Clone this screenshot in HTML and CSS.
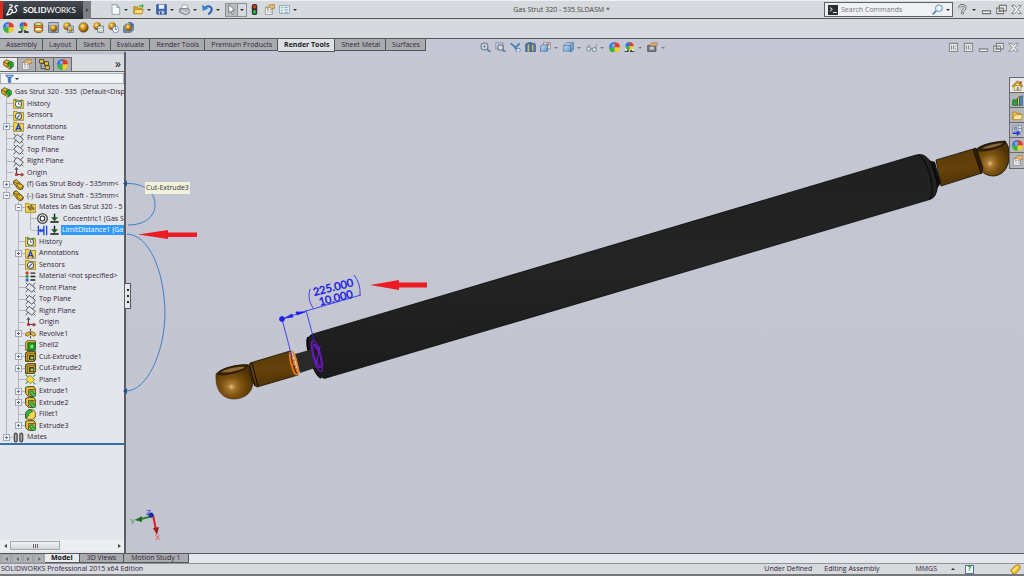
FILE: index.html
```html
<!DOCTYPE html>
<html lang="en">
<head>
<meta charset="utf-8">
<title>Gas Strut 320 - 535.SLDASM</title>
<link rel="stylesheet" href="styles.css">
</head>
<body>
<svg class="defs" aria-hidden="true">
  <defs>
    <radialGradient id="gold" cx=".4" cy=".35" r=".7"><stop offset="0" stop-color="#fff0b0"/><stop offset=".4" stop-color="#d89a20"/><stop offset="1" stop-color="#5a3a00"/></radialGradient>
    <linearGradient id="cube" x1="0" y1="0" x2="1" y2="1"><stop offset="0" stop-color="#d4e8fa"/><stop offset="1" stop-color="#4a86c0"/></linearGradient>
  </defs>
  <symbol id="new" viewBox="0 0 16 16"><path d="M3 1h7l4 4v10H3z" fill="#f8fbff" stroke="#74869a"/><path d="M10 1v4h4" fill="#b9cce0" stroke="#74869a"/></symbol>
  <symbol id="open" viewBox="0 0 16 16"><path d="M1 4h5l1 2h6v8H1z" fill="#e0a820" stroke="#a87810"/><path d="M3 8h12l-2 6H1z" fill="#ffe27a" stroke="#a87810"/><path d="M8 4c1-3 3-3 5-2V0l3 3-3 3V4c-2-1-3-1-5 0z" fill="#35a835"/></symbol>
  <symbol id="save" viewBox="0 0 16 16"><path d="M1 1h14v14H2l-1-1z" fill="#3a62b8" stroke="#1c3a80"/><path d="M4 1h8v6H4z" fill="#e8f0fa"/><path d="M4 10h8v5H4z" fill="#b8c8e0"/><path d="M6 11h2v4H6z" fill="#223c78"/></symbol>
  <symbol id="print" viewBox="0 0 16 16"><path d="M4 7l1-6 7 1 1 6z" fill="#fff" stroke="#8a94a0"/><path d="M1 7l12-1 2 3v4l-5 3-9-4z" fill="#b4bac2" stroke="#606872"/><path d="M3 10l7 3 4-2" fill="none" stroke="#f4f6f8"/></symbol>
  <symbol id="undo" viewBox="0 0 16 16"><path d="M4 6c5-5 11-2 10 3-1 3-3 5-5 6" fill="none" stroke="#2867b8" stroke-width="3"/><path d="M0 1l1 9 8-3z" fill="#3c82d0"/></symbol>
  <symbol id="cursor" viewBox="0 0 16 16"><path d="M4 1v12l3-3 2 5 2-1-2-5h4z" fill="#fff" stroke="#555"/></symbol>
  <symbol id="light" viewBox="0 0 16 16"><rect x="4" y="0" width="8" height="16" rx="3" fill="#303030"/><circle cx="8" cy="4" r="2.600" fill="#e83028"/><circle cx="8" cy="11.500" r="2.600" fill="#28b840"/></symbol>
  <symbol id="props" viewBox="0 0 16 16"><path d="M2 5h10v10H2z" fill="#fff" stroke="#777"/><path d="M4 8h3m1 0h3M4 10h3m1 0h3M4 12h3m1 0h3" stroke="#8a8a98"/><path d="M4 5l4-4h8v5l-5 1-3-2-3 2z" fill="#e3b672" stroke="#8d6228" stroke-width=".8"/></symbol>
  <symbol id="list" viewBox="0 0 16 16"><rect x="1" y="2" width="14" height="12" fill="#e6f0f8" stroke="#7a96aa"/><path d="M3 5l1 1 2-2M3 9l1 1 2-2" fill="none" stroke="#25974a"/><path d="M8 5h5M8 8.500h5M8 12h5M3 12h2" stroke="#6486aa"/></symbol>
  <symbol id="ball" viewBox="0 0 16 16"><path d="M8 8V0a8 8 0 0 1 8 8z" fill="#e33a2c"/><path d="M8 8h8a8 8 0 0 1-8 8z" fill="#f0cc2c"/><path d="M8 8v8a8 8 0 0 1-8-8z" fill="#36b73c"/><path d="M8 8H0a8 8 0 0 1 8-8z" fill="#2b6ee0"/><circle cx="6" cy="5" r="2.500" fill="#fff" opacity=".4"/></symbol>
  <symbol id="scene" viewBox="0 0 16 16"><path d="M0 16l2-7h12l2 7z" fill="#e4e4e4"/><path d="M0 16l1-3h3l1-3 2 2-1 4zM9 16l-1-3 3-2 1 2h3l1 3z" fill="#444"/><path d="M8 6V0a6 6 0 0 1 6 6z" fill="#e33a2c"/><path d="M8 6h6a6 6 0 0 1-6 6z" fill="#f0cc2c"/><path d="M8 6v6a6 6 0 0 1-6-6z" fill="#36b73c"/><path d="M8 6H2a6 6 0 0 1 6-6z" fill="#2b6ee0"/></symbol>
  <symbol id="drum" viewBox="0 0 16 16"><path d="M2 3h12v10c-2 3-10 3-12 0z" fill="#e0a828" stroke="#443008"/><ellipse cx="8" cy="3" rx="6" ry="2" fill="#fff2b0" stroke="#443008"/><path d="M2 6c3 2 9 2 12 0v2c-3 2-9 2-12 0z" fill="#cf3428"/><path d="M4 9h8v3H4z" fill="#f8f8e8"/></symbol>
  <symbol id="goldframe" viewBox="0 0 16 16"><rect x="1" y="1" width="14" height="14" fill="#90a6bd" stroke="#405468"/><path d="M1 3h14" stroke="#fff"/><circle cx="8" cy="9" r="5" fill="url(#gold)"/></symbol>
  <symbol id="gold2" viewBox="0 0 16 16"><circle cx="6" cy="6" r="5.500" fill="url(#gold)"/><rect x="7" y="6" width="8" height="9" fill="#cbd8e4" stroke="#506880"/><circle cx="11" cy="11" r="3" fill="url(#gold)"/></symbol>
  <symbol id="gold1" viewBox="0 0 16 16"><circle cx="8" cy="8" r="7" fill="url(#gold)" stroke="#50380c" stroke-width=".6"/></symbol>
  <symbol id="gold3" viewBox="0 0 16 16"><circle cx="6" cy="6" r="5.500" fill="url(#gold)"/><rect x="7" y="6" width="8" height="9" fill="#f4f8f4" stroke="#506880"/><path d="M8 9l1 1 2-2M8 13l1 1 2-2" fill="none" stroke="#248a3a"/><path d="M12 9h2M12 13h2" stroke="#456"/></symbol>
  <symbol id="gold4" viewBox="0 0 16 16"><circle cx="6" cy="6" r="5.500" fill="url(#gold)"/><circle cx="11" cy="11" r="4.500" fill="#fff" stroke="#3468b0"/><path d="M11 8v3h2" fill="none" stroke="#333"/></symbol>
  <symbol id="gold5" viewBox="0 0 16 16"><path d="M1 6l4-3h10v9l-4 3H1z" fill="#7898b8" stroke="#344e68"/><circle cx="8" cy="8" r="5" fill="url(#gold)"/><path d="M8 1c5-1 6 3 5 6" fill="none" stroke="#2762a8" stroke-width="2"/></symbol>
  <symbol id="asm" viewBox="0 0 16 16"><path d="M1 4l4-3 9 4v4l-3 1 2 3-3 2-4-3-5-3z" fill="#e7bd2d" stroke="#3a2d08"/><path d="M1 4l5 3 3-2M6 7v4" fill="none" stroke="#3a2d08"/><path d="M8 5l4-1 3 2v5l-4 2-3-3z" fill="#2fb53c" stroke="#0c5c18"/><path d="M8 6l4 2v4" fill="none" stroke="#0c5c18"/></symbol>
  <symbol id="part" viewBox="0 0 16 16"><path d="M1 3l4-2 5 5 5 4-1 4-4 2-5-4-1-3-3-2z" fill="#efc232" stroke="#3a2d08" stroke-width="1.300"/><path d="M2 5l4 1 4-0M6 6v4l5 4 4-3M9 9l2-2" fill="none" stroke="#3a2d08"/></symbol>
  <symbol id="cfg" viewBox="0 0 16 16"><path d="M3 1v13h6M3 6h6" fill="none" stroke="#222"/><rect x="1" y="1" width="6" height="5" fill="#efc232" stroke="#222"/><rect x="8" y="4" width="6" height="5" fill="#efc232" stroke="#222"/><rect x="9" y="10" width="6" height="5" fill="#efc232" stroke="#222"/></symbol>
  <symbol id="funnel" viewBox="0 0 16 16"><path d="M1 2h14l-5 6v7H6V8z" fill="#3f86d8" stroke="#1d529a"/><path d="M4 4h8" stroke="#cfe5ff" stroke-width="1.500"/></symbol>
  <symbol id="folder" viewBox="0 0 16 16"><path d="M.5 2h5l1 1.500h9V15H.5z" fill="#f6d248" stroke="#8a6a10"/></symbol>
  <symbol id="history" viewBox="0 0 16 16"><use href="#folder"/><circle cx="8" cy="9" r="4.500" fill="#fff" stroke="#2c6b7c" stroke-width="1.500"/><path d="M8 6v3h3" fill="none" stroke="#c03030" stroke-width="1.200"/><path d="M3 3l2 2M13 3l-2 2" stroke="#2a8838" stroke-width="2"/></symbol>
  <symbol id="sensor" viewBox="0 0 16 16"><use href="#folder"/><circle cx="8" cy="9" r="4.500" fill="#e9f2fa" stroke="#44525e" stroke-width="1.500"/><path d="M6 11l4-4" stroke="#245a9c" stroke-width="1.500"/></symbol>
  <symbol id="annot" viewBox="0 0 16 16"><use href="#folder"/><path d="M4 14l4-9 4 9M5.500 11h5" fill="none" stroke="#1b46c0" stroke-width="2"/></symbol>
  <symbol id="mategroup" viewBox="0 0 16 16"><use href="#folder"/><path d="M4 6l5 6M8 5l5 6" stroke="#4c3e14" stroke-width="3"/><path d="M4 6l5 6M8 5l5 6" stroke="#d8d0a8"/></symbol>
  <symbol id="plane" viewBox="0 0 16 16"><path d="M6 2l9 7-5 6-9-7zM1 1l3 3M15 1l-4 5M1 15l4-5M12 12l3 3" fill="none" stroke="#515963" stroke-width="1.400"/></symbol>
  <symbol id="gplane" viewBox="0 0 16 16"><path d="M7 2l7 6-6 6-7-6z" fill="#f8dc4c" stroke="#7c6310"/><path d="M1 1l3 3M15 1l-3 3M1 14l3-3M12 12l3 3" stroke="#26933a" stroke-width="1.500"/></symbol>
  <symbol id="origin" viewBox="0 0 16 16"><path d="M5 1v10h8" fill="none" stroke="#3c3c44" stroke-width="1.500"/><path d="M2 4l3-4 3 4zM12 8l4 3-4 3z" fill="#555"/><rect x="3" y="9" width="4" height="4" fill="#d03030"/><rect x="11" y="10" width="4" height="3" fill="#d03030"/></symbol>
  <symbol id="conc" viewBox="0 0 16 16"><circle cx="8" cy="8" r="7" fill="#f2f2f2" stroke="#222" stroke-width="1.500"/><circle cx="8" cy="8" r="3.500" fill="#fff" stroke="#222" stroke-width="1.500"/></symbol>
  <symbol id="ground" viewBox="0 0 16 16"><path d="M8 1v8M2 13h12" stroke="#111" stroke-width="2"/><path d="M3 6h10l-5 6z" fill="#1d5c24"/></symbol>
  <symbol id="dist" viewBox="0 0 16 16"><path d="M2 1v14M14 1v14M10 1v14M2 8h8" stroke="#2347dd" stroke-width="2"/><path d="M2 8l4-3v6zM10 8L7 5v6z" fill="#2347dd"/></symbol>
  <symbol id="mat" viewBox="0 0 16 16"><circle cx="3" cy="3" r="2.500" fill="#dc3838"/><circle cx="3" cy="8" r="2.500" fill="#36a844"/><circle cx="3" cy="13" r="2.500" fill="#3868d0"/><path d="M8 3h7M8 8h7M8 13h7" stroke="#222" stroke-width="2"/></symbol>
  <symbol id="revolve" viewBox="0 0 16 16"><path d="M0 10c2-6 14-6 16 0l-4 2c-1-3-7-3-8 0z" fill="#f0c030" stroke="#4a380a"/><path d="M8 1v3M8 6v4M8 12v3" stroke="#333" stroke-width="1.500"/></symbol>
  <symbol id="shell" viewBox="0 0 16 16"><path d="M1 3l3-2h11v11l-3 3H1z" fill="#f0cb38" stroke="#33290a"/><path d="M4 4h11v11H4z" fill="#20942c" stroke="#0b4c14"/><path d="M8 7h4v5H8z" fill="#8bea70"/></symbol>
  <symbol id="cut" viewBox="0 0 16 16"><path d="M1 3l3-2h11v11l-2 3H1z" fill="#edbd28" stroke="#33290a" stroke-width="1.500"/><path d="M4 4h11M4 4v11" stroke="#33290a"/><path d="M6 6h7v7H6z" fill="#34291a"/><path d="M8 8h4v4H8z" fill="#89d884"/></symbol>
  <symbol id="extrude" viewBox="0 0 16 16"><path d="M1 2l3-1h9l2 3v8l-3 3H5l-4-4z" fill="#f0c838" stroke="#33290a" stroke-width="1.300"/><path d="M5 5h9M5 5v9" stroke="#33290a"/><path d="M7 7h5v4h3v4H9v-3H7z" fill="#4cc450" stroke="#105c18"/></symbol>
  <symbol id="fillet" viewBox="0 0 16 16"><path d="M1 14V8c0-4 3-7 7-7h4l3 4v7l-4 3H7z" fill="#f4d84e" stroke="#33290a"/><path d="M1 13V8c0-4 3-7 7-7l3 3c-3 0-6 3-6 6z" fill="#3fb84b" stroke="#104e18"/></symbol>
  <symbol id="clips" viewBox="0 0 16 16"><path d="M2 12V4c0-3 4-3 4 0v8c0 3-4 3-4 0M10 12V4c0-3 4-3 4 0v8c0 3-4 3-4 0" fill="#b4b4b4" stroke="#4e4e4e" stroke-width="2"/></symbol>
  <symbol id="zoomfit" viewBox="0 0 16 16"><circle cx="6.500" cy="6.500" r="5" fill="#d4dbe4" stroke="#66717f" stroke-width="1.500"/><path d="M4 6.500h5M6.500 4v5" stroke="#66717f"/><path d="M10 10l5 5" stroke="#66809e" stroke-width="3"/></symbol>
  <symbol id="zoomarea" viewBox="0 0 16 16"><path d="M1 1h11v9H1z" fill="none" stroke="#66717f" stroke-dasharray="2 1"/><circle cx="8" cy="8" r="4" fill="#d4dbe4" stroke="#66717f" stroke-width="1.500"/><path d="M11 11l4 4" stroke="#66809e" stroke-width="3"/></symbol>
  <symbol id="prev" viewBox="0 0 16 16"><path d="M1 2l7 6 6-6M7 8l5 5" fill="none" stroke="#3c7ab8" stroke-width="2.500"/><circle cx="12" cy="12" r="3" fill="#dde8f2" stroke="#3c6a98"/></symbol>
  <symbol id="section" viewBox="0 0 16 16"><path d="M1 3l4-2h4v12l-4 2H1z" fill="#4e83b8" stroke="#284a6c"/><path d="M9 2h5l1 2v10H9z" fill="#4e83b8" stroke="#284a6c"/><path d="M5 4v10M11 4v9" stroke="#dcb84c" stroke-width="2"/></symbol>
  <symbol id="orient" viewBox="0 0 16 16"><path d="M5 1h10v9H5z" fill="#f2f4f6" stroke="#777"/><path d="M1 6l3-2h7v8l-3 3H1z" fill="url(#cube)" stroke="#3c5c80"/><path d="M12 1v6M9 3h6" stroke="#b85050"/></symbol>
  <symbol id="box" viewBox="0 0 16 16"><path d="M1 5l4-4h10v10l-4 4H1z" fill="url(#cube)" stroke="#466a94"/><path d="M1 5h10v10M11 5l4-4" fill="none" stroke="#466a94"/></symbol>
  <symbol id="glasses" viewBox="0 0 16 16"><circle cx="4" cy="10" r="3" fill="#d6e2ec" stroke="#6e7882" stroke-width="1.300"/><circle cx="12" cy="11" r="3" fill="#d6e2ec" stroke="#6e7882" stroke-width="1.300"/><path d="M7 10h2M2 8l4-5M14 9l2-6" stroke="#6e7882"/></symbol>
  <symbol id="view" viewBox="0 0 16 16"><path d="M1 5h12v9H1z" fill="#777c82" stroke="#444"/><path d="M4 7h6v4H4z" fill="#c4ccd4"/><path d="M3 5l4-4h8v4l-6 1z" fill="#dda968" stroke="#825c2c" stroke-width=".6"/></symbol>
  <symbol id="paneL" viewBox="0 0 16 16"><path d="M2 2h12v12H2z" fill="#eee" stroke="#777" stroke-width="1.500"/><path d="M5 5v6M8 5v6M11 5v2M11 9v2" stroke="#777" stroke-width="1.500"/></symbol>
  <symbol id="min" viewBox="0 0 16 16"><path d="M2 10h12v4H2z" fill="#f4f4f4" stroke="#707070" stroke-width="1.500"/></symbol>
  <symbol id="restore" viewBox="0 0 16 16"><path d="M5 2h10v8H5zM1 6h10v8H1z" fill="#f4f4f4" stroke="#707070" stroke-width="1.500"/><path d="M4 9h4v2H4z" fill="none" stroke="#707070"/></symbol>
  <symbol id="close" viewBox="0 0 16 16"><path d="M1 2h4l3 3 3-3h4l-5 6 5 6h-4l-3-3-3 3H1l5-6z" fill="#f4f4f4" stroke="#707070" stroke-width="1.200"/></symbol>
  <symbol id="help" viewBox="0 0 16 16"><path d="M4 6c0-5 8-5 8-1 0 3-4 3-4 6M8 12v3" fill="none" stroke="#666" stroke-width="4"/><path d="M4 6c0-5 8-5 8-1 0 3-4 3-4 6M8 13v1" fill="none" stroke="#f4f4f4" stroke-width="1.500"/></symbol>
  <symbol id="lens" viewBox="0 0 16 16"><circle cx="10" cy="6" r="4.700" fill="#edf6ff" stroke="#6b96c4" stroke-width="1.500"/><path d="M6 10l-5 5" stroke="#5a84b0" stroke-width="2.500"/></symbol>
  <symbol id="prompt" viewBox="0 0 16 16"><path d="M0 0h16v16H0z" fill="#2a2d31"/><path d="M3 4l4 3-4 3M8 12h6" fill="none" stroke="#fff" stroke-width="1.500"/></symbol>
  <symbol id="home" viewBox="0 0 16 16"><path d="M11 2h3v5h-3z" fill="#b23b22"/><path d="M3 8h10v7H3z" fill="#fbeaa6" stroke="#9a7620"/><path d="M0 9l8-8 8 8-2 1-6-6-6 6z" fill="#e5ac2c" stroke="#886414"/><path d="M7 10h3v5H7z" fill="#7895bc"/></symbol>
  <symbol id="library" viewBox="0 0 16 16"><path d="M8 4l3-2v13H8z" fill="#eac43c" stroke="#7c620e"/><path d="M11 3l4-2v14h-4z" fill="#5288c4" stroke="#264c7c"/><path d="M1 8l3-2 1 3 3-4v10H1z" fill="#33a43e" stroke="#15591c"/></symbol>
  <symbol id="fold2" viewBox="0 0 16 16"><path d="M1 3h5l1 2h6v9H1z" fill="#f0c448" stroke="#a07818"/><path d="M4 7h12l-3 7H1z" fill="#ffe9a0" stroke="#a07818"/></symbol>
  <symbol id="palette" viewBox="0 0 16 16"><path d="M1 1h13v8H1z" fill="#e5eaf0" stroke="#66788c"/><path d="M3 3h4v4H3zM9 2v6M9 5h5" fill="#8ca6c0" stroke="#526c88"/><path d="M1 12h8M7 9l4 3-4 3" fill="none" stroke="#2432d8" stroke-width="2"/></symbol>
  <symbol id="tag" viewBox="0 0 16 16"><path d="M1 9l7-7 5-1 2 2-1 5-7 7-3-1z" fill="#f2c02c" stroke="#8a6008"/><path d="M4 11l7-7" stroke="#fff0a0" stroke-width="2"/></symbol>
</svg>

<div class="app">
  <header class="titlebar">
    <div class="brand">
      <svg class="ds" viewBox="0 0 16 16" aria-hidden="true"><path d="M4 2c5-1 5 2 0 4M3 8c5-2 6 0 4 3-1 2-3 3-6 3l3-6M15 3c-4-1-5 1-3 3s1 6-4 5" fill="none" stroke="#fff" stroke-width="1.500"/></svg>
      <span class="wordmark"><b>SOLID</b>WORKS</span>
    </div>
    <button class="brand-more" aria-label="Show menu"><i class="tri right"></i></button>
    <div class="quick">
      <button class="tool" aria-label="New"><svg><use href="#new"/></svg></button><button class="drop" aria-label="New options"><i class="tri"></i></button>
      <button class="tool" aria-label="Open"><svg><use href="#open"/></svg></button><button class="drop" aria-label="Open options"><i class="tri"></i></button>
      <button class="tool" aria-label="Save"><svg><use href="#save"/></svg></button><button class="drop" aria-label="Save options"><i class="tri"></i></button>
      <button class="tool" aria-label="Print"><svg><use href="#print"/></svg></button><button class="drop" aria-label="Print options"><i class="tri"></i></button>
      <button class="tool" aria-label="Undo"><svg><use href="#undo"/></svg></button><button class="drop" aria-label="Undo options"><i class="tri"></i></button>
      <span class="split"><button class="tool pressed" aria-label="Select"><svg><use href="#cursor"/></svg></button><button class="drop" aria-label="Select options"><i class="tri"></i></button></span>
      <button class="tool wide" aria-label="Rebuild"><svg><use href="#light"/></svg></button>
      <button class="tool wide" aria-label="File properties"><svg><use href="#props"/></svg></button>
      <button class="tool wide" aria-label="Options"><svg><use href="#list"/></svg></button><button class="drop last" aria-label="More options"><i class="tri"></i></button>
    </div>
    <h1 class="doc">Gas Strut 320 - 535.SLDASM *</h1>
    <form class="search" role="search">
      <svg><use href="#prompt"/></svg>
      <input type="text" placeholder="Search Commands" aria-label="Search Commands">
      <button type="button" class="tool" aria-label="Search"><svg><use href="#lens"/></svg></button><button type="button" class="drop" aria-label="Search options"><i class="tri"></i></button>
    </form>
    <div class="win">
      <button class="tool" aria-label="Help"><svg><use href="#help"/></svg></button><button class="drop" aria-label="Help options"><i class="tri"></i></button>
      <button class="tool" aria-label="Minimize"><svg><use href="#min"/></svg></button>
      <button class="tool" aria-label="Restore"><svg><use href="#restore"/></svg></button>
      <button class="tool" aria-label="Close"><svg><use href="#close"/></svg></button>
    </div>
  </header>

  <div class="render-tools">
    <button class="tool" aria-label="Edit Appearance"><svg><use href="#ball"/></svg></button>
    <button class="tool" aria-label="Edit Scene"><svg><use href="#scene"/></svg></button>
    <button class="tool" aria-label="Edit Decal"><svg><use href="#drum"/></svg></button>
    <button class="tool" aria-label="Integrated Preview"><svg><use href="#goldframe"/></svg></button>
    <button class="tool" aria-label="Preview Window"><svg><use href="#gold2"/></svg></button>
    <button class="tool" aria-label="Final Render"><svg><use href="#gold1"/></svg></button>
    <button class="tool" aria-label="Render Options"><svg><use href="#gold3"/></svg></button>
    <button class="tool" aria-label="Schedule Render"><svg><use href="#gold4"/></svg></button>
    <button class="tool" aria-label="Recall Last Render"><svg><use href="#gold5"/></svg></button>
  </div>

  <div class="tabrow">
    <div class="tabs" role="tablist" aria-label="Command manager">
      <button role="tab">Assembly</button><button role="tab">Layout</button><button role="tab">Sketch</button><button role="tab">Evaluate</button><button role="tab">Render Tools</button><button role="tab">Premium Products</button><button role="tab" class="on" aria-selected="true">Render Tools</button><button role="tab">Sheet Metal</button><button role="tab">Surfaces</button>
    </div>
    <div class="hud">
      <button class="tool" aria-label="Zoom to Fit"><svg><use href="#zoomfit"/></svg></button>
      <button class="tool" aria-label="Zoom to Area"><svg><use href="#zoomarea"/></svg></button>
      <button class="tool" aria-label="Previous View"><svg><use href="#prev"/></svg></button>
      <button class="tool" aria-label="Section View"><svg><use href="#section"/></svg></button>
      <button class="tool" aria-label="View Orientation"><svg><use href="#orient"/></svg></button><button class="drop" aria-label="Orientation options"><i class="tri"></i></button>
      <button class="tool" aria-label="Display Style"><svg><use href="#box"/></svg></button><button class="drop" aria-label="Display options"><i class="tri"></i></button>
      <button class="tool" aria-label="Hide/Show Items"><svg><use href="#glasses"/></svg></button><button class="drop" aria-label="Visibility options"><i class="tri"></i></button>
      <button class="tool" aria-label="Edit Appearance"><svg><use href="#ball"/></svg></button>
      <button class="tool" aria-label="Apply Scene"><svg><use href="#scene"/></svg></button><button class="drop" aria-label="Scene options"><i class="tri"></i></button>
      <button class="tool" aria-label="View Settings"><svg><use href="#view"/></svg></button><button class="drop" aria-label="View options"><i class="tri"></i></button>
    </div>
    <div class="docwin">
      <button class="tool" aria-label="Dock left"><svg><use href="#paneL"/></svg></button>
      <button class="tool" aria-label="Dock right"><svg><use href="#paneL"/></svg></button>
      <button class="tool" aria-label="Minimize document"><svg><use href="#min"/></svg></button>
      <button class="tool" aria-label="Restore document"><svg><use href="#restore"/></svg></button>
      <button class="tool" aria-label="Close document"><svg><use href="#close"/></svg></button>
    </div>
  </div>

  <main class="work">
    <aside class="panel">
      <div class="ptabs">
        <button class="on" aria-label="FeatureManager"><svg><use href="#asm"/></svg></button>
        <button aria-label="PropertyManager"><svg><use href="#props"/></svg></button>
        <button aria-label="ConfigurationManager"><svg><use href="#cfg"/></svg></button>
        <button aria-label="DisplayManager"><svg><use href="#ball"/></svg></button>
        <button class="more" aria-label="More tabs">»</button>
      </div>
      <button class="filter" aria-label="Filter"><svg><use href="#funnel"/></svg><i class="tri"></i></button>
      <ul class="tree">
        <li><svg class="root"><use href="#asm"/></svg><span>Gas Strut 320 - 535&nbsp; (Default&lt;Disp</span></li>
        <li><i class="g e"></i><svg><use href="#history"/></svg><span>History</span></li>
        <li><i class="g e"></i><svg><use href="#sensor"/></svg><span>Sensors</span></li>
        <li><i class="g e"><button class="tw plus" aria-label="Expand Annotations"></button></i><svg><use href="#annot"/></svg><span>Annotations</span></li>
        <li><i class="g e"></i><svg><use href="#plane"/></svg><span>Front Plane</span></li>
        <li><i class="g e"></i><svg><use href="#plane"/></svg><span>Top Plane</span></li>
        <li><i class="g e"></i><svg><use href="#plane"/></svg><span>Right Plane</span></li>
        <li><i class="g e"></i><svg><use href="#origin"/></svg><span>Origin</span></li>
        <li><i class="g e"><button class="tw plus" aria-label="Expand Gas Strut Body"></button></i><svg><use href="#part"/></svg><span>(f) Gas Strut Body - 535mm&lt;</span></li>
        <li><i class="g e"><button class="tw" aria-label="Collapse Gas Strut Shaft"></button></i><svg><use href="#part"/></svg><span>(-) Gas Strut Shaft - 535mm&lt;</span></li>
        <li><i class="g"></i><i class="g e"><button class="tw" aria-label="Collapse Mates"></button></i><svg><use href="#mategroup"/></svg><span>Mates in Gas Strut 320 - 5</span></li>
        <li><i class="g"></i><i class="g"></i><i class="g e"></i><svg><use href="#conc"/></svg><svg class="second"><use href="#ground"/></svg><span>Concentric1 (Gas S</span></li>
        <li><i class="g"></i><i class="g"></i><i class="g e end"></i><svg><use href="#dist"/></svg><svg class="second"><use href="#ground"/></svg><span class="sel">LimitDistance1 (Ga</span></li>
        <li><i class="g"></i><i class="g e"></i><svg><use href="#history"/></svg><span>History</span></li>
        <li><i class="g"></i><i class="g e"><button class="tw plus" aria-label="Expand Annotations"></button></i><svg><use href="#annot"/></svg><span>Annotations</span></li>
        <li><i class="g"></i><i class="g e"></i><svg><use href="#sensor"/></svg><span>Sensors</span></li>
        <li><i class="g"></i><i class="g e"></i><svg><use href="#mat"/></svg><span>Material &lt;not specified&gt;</span></li>
        <li><i class="g"></i><i class="g e"></i><svg><use href="#plane"/></svg><span>Front Plane</span></li>
        <li><i class="g"></i><i class="g e"></i><svg><use href="#plane"/></svg><span>Top Plane</span></li>
        <li><i class="g"></i><i class="g e"></i><svg><use href="#plane"/></svg><span>Right Plane</span></li>
        <li><i class="g"></i><i class="g e"></i><svg><use href="#origin"/></svg><span>Origin</span></li>
        <li><i class="g"></i><i class="g e"><button class="tw plus" aria-label="Expand Revolve1"></button></i><svg><use href="#revolve"/></svg><span>Revolve1</span></li>
        <li><i class="g"></i><i class="g e"></i><svg><use href="#shell"/></svg><span>Shell2</span></li>
        <li><i class="g"></i><i class="g e"><button class="tw plus" aria-label="Expand Cut-Extrude1"></button></i><svg><use href="#cut"/></svg><span>Cut-Extrude1</span></li>
        <li><i class="g"></i><i class="g e"><button class="tw plus" aria-label="Expand Cut-Extrude2"></button></i><svg><use href="#cut"/></svg><span>Cut-Extrude2</span></li>
        <li><i class="g"></i><i class="g e"></i><svg><use href="#gplane"/></svg><span>Plane1</span></li>
        <li><i class="g"></i><i class="g e"><button class="tw plus" aria-label="Expand Extrude1"></button></i><svg><use href="#extrude"/></svg><span>Extrude1</span></li>
        <li><i class="g"></i><i class="g e"><button class="tw plus" aria-label="Expand Extrude2"></button></i><svg><use href="#extrude"/></svg><span>Extrude2</span></li>
        <li><i class="g"></i><i class="g e"></i><svg><use href="#fillet"/></svg><span>Fillet1</span></li>
        <li><i class="g"></i><i class="g e end"><button class="tw plus" aria-label="Expand Extrude3"></button></i><svg><use href="#extrude"/></svg><span>Extrude3</span></li>
        <li><i class="g e end"><button class="tw plus" aria-label="Expand Mates"></button></i><svg><use href="#clips"/></svg><span>Mates</span></li>
      </ul>
      <div class="hscroll">
        <button aria-label="Scroll left"><i class="tri left"></i></button>
        <div class="thumb"><i></i><i></i><i></i></div>
        <button aria-label="Scroll right"><i class="tri right"></i></button>
      </div>
    </aside>

    <section class="viewport" aria-label="Graphics area">
      <svg class="model" viewBox="126 52 898 501" preserveAspectRatio="xMinYMin meet">
        <defs>
          <radialGradient id="brass" cx=".42" cy=".64" r=".6"><stop offset="0" stop-color="#e2bf86"/><stop offset=".16" stop-color="#a87a35"/><stop offset=".45" stop-color="#7d530f"/><stop offset="1" stop-color="#4c3006"/></radialGradient>
          <linearGradient id="rod" x1=".4" y1="0" x2=".6" y2="1"><stop offset="0" stop-color="#57390a"/><stop offset=".5" stop-color="#65420b"/><stop offset="1" stop-color="#4d3003"/></linearGradient>
          <linearGradient id="tube" x1=".49" y1="0" x2=".51" y2="1"><stop offset="0" stop-color="#202020"/><stop offset=".5" stop-color="#242424"/><stop offset="1" stop-color="#1b1b1b"/></linearGradient>
        </defs>
        <g stroke="#171006" stroke-width=".8">
          <path d="M976 150C978 146 990 142 1005 141C1009 146 1010 152 1009 160C1007 170 1002 175 994 176C984 176 979 170 978 164z" fill="url(#brass)"/>
          <path d="M977 150C979 145 998 141 1006 142C1003 148 982 153 977 150z" fill="#3d2806"/>
          <path d="M981 149C985 145 998 142 1004 143C1000 147 986 150 981 149z" fill="#8a673a"/>
          <path d="M936 160L973 149L982 173L941 186z" fill="url(#rod)"/>
          <path d="M973 149L976 148L983 168L981 174z" fill="#2e1d05"/>
        </g>
        <path d="M928 160L935 162L941 183L936 190z" fill="#111"/>
        <path d="M313 334L916 155C923 153 928 157 931 163C936 173 939 188 936 193C935 197 932 199 928 200L326 378C320 380 315 369 311 357C307 344 306 336 313 334z" fill="url(#tube)" stroke="#080808" stroke-width=".8"/>
        <path d="M919 155C927 160 936 187 930 199M931 162L938 184" fill="none" stroke="#050505"/>
        <path d="M308 337C305 345 313 373 321 378" fill="none" stroke="#050505" stroke-width="2"/>
        <path d="M295 354L313 349L318 367L300 373z" fill="#292929"/>
        <g fill="none" stroke="#6f19d2"><ellipse cx="317" cy="356" rx="4" ry="16" transform="rotate(-15 317 356)"/><ellipse cx="317" cy="356" rx="3" ry="12" transform="rotate(-15 317 356)"/><path d="M312 342l8 12M314 356l7 12M320 346l-4 20"/></g>
        <path d="M216 374C222 368 238 364 248 365C252 369 253 375 253 382C253 391 246 399 234 399C223 399 215 391 216 374z" fill="url(#brass)" stroke="#3a2606" stroke-width=".6"/>
        <path d="M217 374C219 369 236 364 248 365C246 371 223 377 217 374z" fill="#3d2806" stroke="#171006" stroke-width=".8"/>
        <path d="M221 372C226 369 239 366 245 367C240 371 227 373 221 372z" fill="#8f6b3b"/>
        <path d="M250 363L290 351L298 375L257 387C252 386 248 368 250 363z" fill="url(#rod)" stroke="#171006" stroke-width=".8"/>
        <path d="M249 364L255 386M252 363L258 386" stroke="#130c02"/>
        <g fill="none" stroke="#f27c16" stroke-width="1.500"><ellipse cx="294" cy="363" rx="3" ry="12" transform="rotate(-14 294 363)"/><path d="M291 354l6 18M296 358l-4 8" stroke-width="1"/></g>
        <g stroke="#2222ee" fill="none" stroke-width=".8">
          <path d="M282 319L292 357M306 310L314 340M282 319L306 311L361 295M310 289Q307 299 313 308M354 275Q361 284 360 295"/>
          <path d="M285 318l7-4 1 3zM305 312l-9 0 1 3z" fill="#2222ee"/>
          <circle cx="282" cy="319" r="2.500" fill="#2222ee"/>
        </g>
        <g class="dim" transform="translate(334 291) rotate(-14)"><text x="0" y="0">225.000</text><text x="0" y="11">10.000</text></g>
        <g fill="none" stroke="#3a80c8"><path d="M126 183.500C143 183 155 191 155 205C155 217 144 225 128 225M127 234C149 235 164 270 165 312C165 352 147 391 126 391"/><path d="M123 183.500l4-3v6zM123 391l4-3v6z" fill="#23568d" stroke="none"/></g>
        <g fill="#ed1c24"><path d="M138 234.500L168 230V232.500H197V237H168V239z"/><path d="M370 285L399 280V282.500H427V287.500H399V290z"/></g>
        <g class="triad">
          <path d="M153 516L137 520" stroke="#2d8730" stroke-width="2"/><path d="M135 520l7-4v6z" fill="#226a26"/>
          <path d="M153 515L156 530" stroke="#e02020" stroke-width="2"/><path d="M153 528l6-1-2 8z" fill="#a51c1c"/>
          <circle cx="151" cy="515" r="2.500" fill="#1a2ca8"/>
          <text x="130" y="524" fill="#2d9a30">Y</text><text x="155" y="540" fill="#ee3a3a">X</text><text x="146" y="515" fill="#2525e5">Z</text>
        </g>
      </svg>
      <div class="tip" role="tooltip">Cut-Extrude3</div>
      <button class="grip" aria-label="Resize panel"><i></i><i></i><i></i></button>
      <nav class="taskpane" aria-label="Task pane">
        <button class="on" aria-label="Resources"><svg><use href="#home"/></svg></button>
        <button aria-label="Design Library"><svg><use href="#library"/></svg></button>
        <button aria-label="File Explorer"><svg><use href="#fold2"/></svg></button>
        <button aria-label="View Palette"><svg><use href="#palette"/></svg></button>
        <button aria-label="Appearances"><svg><use href="#ball"/></svg></button>
        <button aria-label="Custom Properties"><svg><use href="#props"/></svg></button>
      </nav>
    </section>
  </main>

  <div class="sheets">
    <div class="nav">
      <button disabled aria-label="First"><i class="tri left"></i></button><button disabled aria-label="Previous"><i class="tri left"></i></button><button disabled aria-label="Next"><i class="tri right"></i></button><button disabled aria-label="Last"><i class="tri right"></i></button>
    </div>
    <div class="stabs" role="tablist" aria-label="Sheets"><button role="tab" class="on" aria-selected="true">Model</button><button role="tab">3D Views</button><button role="tab">Motion Study 1</button></div>
  </div>

  <footer class="status">
    <span class="edition">SOLIDWORKS Professional 2015 x64 Edition</span>
    <span class="state">Under Defined</span>
    <span class="mode">Editing Assembly</span>
    <span class="units">MMGS</span>
    <button class="drop" aria-label="Unit system"><i class="tri up"></i></button>
    <button class="qhelp" aria-label="Quick tips">?</button>
    <button class="tool" aria-label="Tags"><svg><use href="#tag"/></svg></button>
  </footer>
</div>
</body>
</html>
```

FILE: styles.css
```css
* { box-sizing: border-box; }
html, body { height: 100%; }
body {
  margin: 0;
  overflow: hidden;
  font: 7px/10px "Open Sans", "Noto Sans", sans-serif;
  color: #33243a;
  background: #c4c7d2;
}
button, input { font: inherit; color: inherit; padding: 0; border: 0; background: none; border-radius: 0; }
button { display: flex; align-items: center; justify-content: center; flex: none; white-space: nowrap; }
.defs { position: absolute; width: 0; height: 0; }
.app { display: flex; flex-direction: column; height: 100vh; border-bottom: 2px solid #77787a; }

.tool { width: 11px; height: 12px; }
.tool svg, .ptabs svg, .filter svg, .taskpane svg, .search > svg { width: 11px; height: 11px; display: block; flex: none; }
.tri { display: block; border: 2px solid transparent; border-top-color: #333; border-bottom: 0; }
.tri.right { border: 2px solid transparent; border-left: 3px solid #444; border-right: 0; }
.tri.left { border: 2px solid transparent; border-right: 3px solid #444; border-left: 0; }
.tri.up { border: 2px solid transparent; border-bottom-color: #333; border-top: 0; }
.drop { width: 8px; height: 12px; }

/* title bar */
.titlebar { display: flex; align-items: center; height: 19px; flex: none; background: #d6d9dd; border-top: 1px solid #edf0f4; border-bottom: 1px solid #58595c; }
.brand { display: flex; align-items: center; gap: 4px; width: 83px; height: 18px; flex: none; padding-left: 3px; border-left: 3px solid #e02a20; background: linear-gradient(#464c52, #23282d); color: #fff; }
.ds { width: 13px; height: 14px; flex: none; }
.wordmark { font: 8px/10px Lato, sans-serif; }
.brand-more { width: 8px; height: 18px; background: #7b7f84; }
.quick { display: flex; align-items: center; padding-left: 19px; flex: none; }
.quick > .drop { width: 9px; margin-right: 3px; }
.quick > .last { margin: 0 0 0 -2px; }
.split { display: flex; border: 1px solid #8b8e93; height: 14px; align-items: center; }
.split .pressed { width: 12px; border-right: 1px solid #8b8e93; background: #b9bcc1; height: 12px; }
.quick .wide { width: 15px; }
.doc { flex: 1; margin: 0; font-size: 7px; font-weight: 400; text-align: center; color: #444; white-space: nowrap; }
.search { display: flex; align-items: center; width: 129px; height: 15px; margin: 0; padding-left: 3px; border: 1px solid #5d6064; background: #eef0f3; flex: none; }
.search > svg { width: 10px; height: 10px; }
.search input { flex: 1; min-width: 0; padding-left: 3px; outline: 0; }
.search input::placeholder { color: #777; opacity: 1; }
.search .drop { width: 9px; }
.win { display: flex; align-items: center; gap: 4px; padding: 0 2px 0 4px; flex: none; }
.win .drop { width: 4px; margin-right: 1px; }

.render-tools { display: flex; align-items: center; gap: 4px; height: 19px; flex: none; padding: 0 0 3px 3px; background: #d6d9dd; }

/* command manager tabs and view toolbar */
.tabrow { display: flex; height: 14px; flex: none; border-top: 1px solid #55565a; background: #c5c8d4; }
.tabs { display: flex; align-items: flex-start; flex: none; }
.tabs button { height: 12px; padding: 0 5px 0 6px; background: #a9abaf; border-right: 1px solid #55565a; border-bottom: 1px solid #55565a; }
.tabs .on { height: 13px; background: #dcdfe3; font-weight: 700; color: #222; }
.hud { display: flex; align-items: center; gap: 4px; height: 17px; margin-left: 54px; margin-right: auto; }
.hud .drop { width: 6px; margin: 0 0 0 -2px; opacity: .5; }
.docwin { display: flex; align-items: center; gap: 4px; height: 17px; padding-right: 5px; opacity: .8; }

/* feature tree */
.work { display: flex; flex: 1; min-height: 0; }
.panel { display: flex; flex-direction: column; width: 126px; flex: none; border-right: 2px solid #5c5e63; background: #e3e6eb; }
.ptabs { display: flex; height: 20px; padding-top: 5px; flex: none; background: linear-gradient(#bcc2d0 2px, #d9dce1 3px); border-bottom: 1px solid #66686c; }
.ptabs button { width: 18px; height: 14px; border: 1px solid #66686c; border-left: 0; border-bottom: 0; background: #aeb0b4; }
.ptabs .on { background: #e6e9ed; }
.ptabs .more { margin-left: auto; width: 12px; border: 0; background: none; font-size: 12px; color: #111; }
.filter { justify-content: flex-start; gap: 1px; height: 11px; margin-top: 1px; padding-left: 4px; border: 1px solid #a9acb2; background: #f3f4f6; }
.filter svg { width: 9px; height: 9px; }
.tree { list-style: none; margin: 0; padding: 2px 0 0 1px; overflow: hidden; flex: none; border-bottom: 2px solid #3a6ea8; }
.tree li { display: flex; align-items: center; height: 12px; white-space: nowrap; }
.tree li:nth-child(even) { height: 11px; }
.tree svg { width: 11px; height: 11px; flex: none; }
.tree svg + svg { margin-left: 1px; }
.tree span { margin-left: 2px; padding-left: 1px; }
.tree .sel { flex: 1; margin-left: 1px; background: #3399ff; color: #fff; }
.g { display: flex; align-items: center; position: relative; width: 12px; align-self: stretch; flex: none; background: linear-gradient(#b2b5ba, #b2b5ba) 5px 0 / 1px 100% no-repeat; }
.g.e { background: linear-gradient(#b2b5ba, #b2b5ba) 5px 0 / 1px 100% no-repeat, linear-gradient(#b2b5ba, #b2b5ba) 6px 50% / 6px 1px no-repeat; }
.g.end { background-size: 1px 50%, 6px 1px; }
.tw { width: 5px; height: 5px; margin-left: 3px; outline: 1px solid #a3a8b4; background: linear-gradient(#5f78a8, #5f78a8) 50% 50% / 3px 1px no-repeat #f0f2f5; }
.tw.plus { background: linear-gradient(#5f78a8, #5f78a8) 50% 50% / 3px 1px no-repeat, linear-gradient(#5f78a8, #5f78a8) 50% 50% / 1px 3px no-repeat #f0f2f5; }
.hscroll { display: flex; align-items: center; height: 11px; margin-top: auto; margin-bottom: 2px; background: #edeef0; flex: none; }
.hscroll button { width: 10px; height: 11px; }
.thumb { display: flex; align-items: center; justify-content: center; gap: 1px; width: 50px; height: 9px; margin-right: auto; border: 1px solid #a6a8ac; background: linear-gradient(#f4f4f6, #d3d5d9); }
.thumb i { width: 1px; height: 4px; background: #666; }

/* graphics area */
.viewport { position: relative; flex: 1; min-width: 0; background: linear-gradient(#c5c8d4, #c2c5cf); }
.model { display: block; width: 100%; height: 100%; overflow: visible; position: relative; }
.dim text { font: 11px/11px Lato, sans-serif; fill: #1616e8; stroke: #1616e8; stroke-width: .4px; text-anchor: middle; }
.triad text { font: 8px/8px "Liberation Sans", sans-serif; }
.tip { position: absolute; left: 19px; top: 130px; padding: 1px 1px; background: #f1f1dc; color: #333; white-space: nowrap; }
.grip { position: absolute; left: -1px; top: 231px; width: 6px; height: 26px; flex-direction: column; gap: 4px; border: 1px solid #55575c; border-left: 0; background: #e3e6eb; }
.grip i { width: 2px; height: 2px; background: #222; }
.taskpane { position: absolute; right: 0; top: 25px; border: 1px solid #66686c; border-right: 0; }
.taskpane button { width: 14px; height: 15px; background: #b5b7bb; border-bottom: 1px solid #66686c; }
.taskpane button:last-child { border-bottom: 0; }
.taskpane .on { background: #e6e8ec; }

/* sheet tabs and status bar */
.sheets { display: flex; height: 10px; flex: none; border-top: 1px solid #55575c; background: #e3e6ea; }
.nav { display: flex; padding-left: 1px; background: #a9abaf; }
.nav button { width: 10px; height: 9px; margin-right: 1px; border: 1px solid #9a9ca1; background: #b5b7bb; opacity: .6; }
.stabs { display: flex; }
.stabs button { height: 9px; padding: 0 7px; border-right: 1px solid #55575c; border-bottom: 1px solid #55575c; background: #a9abaf; }
.stabs .on { padding: 0 6px; background: #e9ebee; font-weight: 700; color: #111; }
.status { display: flex; align-items: center; height: 11px; flex: none; padding: 0 3px 0 1px; border-top: 1px solid #929498; background: #d6d9dd; }
.edition { flex: 1; }
.state { margin-right: 12px; }
.mode { margin-right: 36px; }
.units { margin-right: 12px; }
.qhelp { width: 9px; height: 9px; margin: 0 36px 0 8px; border: 1px solid #54729a; background: #f0f8f0; color: #159030; font-weight: 700; }
```
